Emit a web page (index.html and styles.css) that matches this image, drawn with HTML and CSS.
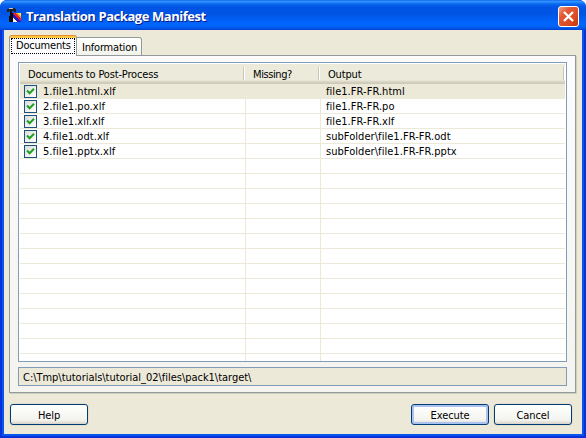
FILE: index.html
```html
<!DOCTYPE html>
<html lang="en">
<head>
<meta charset="utf-8">
<title>Translation Package Manifest</title>
<link rel="stylesheet" href="styles.css">
</head>
<body>
<div class="window">
  <header class="titlebar">
    <svg class="app-icon" width="16" height="16" viewBox="0 0 16 16" shape-rendering="crispEdges">
      <path d="M6 5h9v9H6z" fill="#e81c30"/>
      <path d="M11 5h4v4z" fill="#ffe838"/>
      <path d="M9 5h2l4 4v2z" fill="#ff9020"/>
      <path d="M6 5l9 9h-4L6 9z" fill="#3018b8"/>
      <path d="M6 9l5 5H6z" fill="#fff"/>
      <path d="M4 3h2v2h1v9H3V8h1z" fill="#0c0c0c"/>
      <path d="M1 1h2V0h6v1h1v3H8V3H3v1H1z" fill="#202020"/>
      <path d="M3 0h4v1H3z" fill="#c0c4c8"/>
    </svg>
    <h1 class="title">Translation Package Manifest</h1>
    <button class="close" aria-label="Close"><svg width="19" height="19" viewBox="0 0 19 19"><path d="M5 5l9 9M14 5l-9 9" stroke="#fff" stroke-width="2.3" fill="none"/></svg></button>
  </header>
  <main class="content">
    <nav class="tabs">
      <div class="tab active"><span class="focus"><span class="t-docs">Documents</span></span></div>
      <div class="tab"><span class="t-info">Information</span></div>
    </nav>
    <section class="panel">
      <div class="list">
        <div class="row head"><span><b class="h-docs">Documents to Post-Process</b></span><span><b class="h-miss">Missing?</b></span><span><b class="h-out">Output</b></span></div>
        <div class="rows">
          <div class="row selected"><span><i class="check"><svg width="11" height="11" viewBox="0 0 11 11"><path d="M2 4.5l2.6 2.7L9 2.7" /></svg></i><b>1.file1.html.xlf</b></span><span></span><span><b>file1.FR-FR.html</b></span></div>
          <div class="row"><span><i class="check"><svg width="11" height="11" viewBox="0 0 11 11"><path d="M2 4.5l2.6 2.7L9 2.7" /></svg></i><b>2.file1.po.xlf</b></span><span></span><span><b>file1.FR-FR.po</b></span></div>
          <div class="row"><span><i class="check"><svg width="11" height="11" viewBox="0 0 11 11"><path d="M2 4.5l2.6 2.7L9 2.7" /></svg></i><b>3.file1.xlf.xlf</b></span><span></span><span><b>file1.FR-FR.xlf</b></span></div>
          <div class="row"><span><i class="check"><svg width="11" height="11" viewBox="0 0 11 11"><path d="M2 4.5l2.6 2.7L9 2.7" /></svg></i><b>4.file1.odt.xlf</b></span><span></span><span><b>subFolder\file1.FR-FR.odt</b></span></div>
          <div class="row"><span><i class="check"><svg width="11" height="11" viewBox="0 0 11 11"><path d="M2 4.5l2.6 2.7L9 2.7" /></svg></i><b>5.file1.pptx.xlf</b></span><span></span><span><b>subFolder\file1.FR-FR.pptx</b></span></div>
          <div class="row"><span></span><span></span><span></span></div>
          <div class="row"><span></span><span></span><span></span></div>
          <div class="row"><span></span><span></span><span></span></div>
          <div class="row"><span></span><span></span><span></span></div>
          <div class="row"><span></span><span></span><span></span></div>
          <div class="row"><span></span><span></span><span></span></div>
          <div class="row"><span></span><span></span><span></span></div>
          <div class="row"><span></span><span></span><span></span></div>
          <div class="row"><span></span><span></span><span></span></div>
          <div class="row"><span></span><span></span><span></span></div>
          <div class="row"><span></span><span></span><span></span></div>
          <div class="row"><span></span><span></span><span></span></div>
          <div class="row"><span></span><span></span><span></span></div>
          <div class="row last"><span></span><span></span><span></span></div>
        </div>
      </div>
      <div class="path"><span>C:\Tmp\tutorials\tutorial_02\files\pack1\target\</span></div>
    </section>
    <footer class="actions">
      <button class="btn help">Help</button>
      <button class="btn default">Execute</button>
      <button class="btn">Cancel</button>
    </footer>
  </main>
</div>
</body>
</html>
```
FILE: styles.css
```css
* { box-sizing: border-box; }
body { margin: 0; background: #fff; font: 11px/13px "DejaVu Sans Condensed", "DejaVu Sans", sans-serif; font-stretch: condensed; letter-spacing: -0.2px; color: #000; overflow: hidden; }
b, i { font-weight: normal; font-style: normal; }
.window { width: 586px; height: 438px; border-radius: 7px 7px 0 0; background: #0831d9; overflow: hidden; display: flex; flex-direction: column; }
.titlebar { height: 30px; flex: none; display: flex; align-items: flex-start; padding: 6px 7px 0 6px; background: linear-gradient(#0058e6 0, #3a93ff 1px, #288eff 2px, #0b66ee 4px, #0055e5 7px, #0054e3 14px, #0060f8 20px, #0066ff 25px, #005bea 28px, #003dd0 30px); }
.app-icon { margin-top: 2px; flex: none; }
.title { flex: 1; margin: 2px 0 0 4px; font: bold 13px/17px "Open Sans", "Noto Sans", sans-serif; letter-spacing: -0.44px; color: #fff; text-shadow: 1px 1px #0a1883; white-space: nowrap; }
.close { width: 21px; height: 21px; padding: 0; border: 1px solid #fff; border-radius: 3px; background: linear-gradient(135deg, #f0a088, #e35a37 30%, #dc4a22 70%, #c33308); }
.close svg { display: block; }
.content { flex: 1; display: flex; flex-direction: column; margin: 0 4px 4px; padding: 5px 6px 9px 5px; background: #ece9d8; box-shadow: 0 0 0 2px #0855ee; clip-path: inset(0 -2px -2px -2px); }
.tabs { display: flex; align-items: flex-end; height: 21px; flex: none; position: relative; margin-bottom: -1px; }
.tab { width: 65px; height: 19px; padding: 3px 0 0 5px; border: 1px solid #919b9c; border-left: 0; border-radius: 0 3px 0 0; background: linear-gradient(#fff, #f3f3ec); white-space: nowrap; }
.tab.active { width: 68px; height: 21px; padding: 3px 1px 0; border: 1px solid #919b9c; border-width: 0 1px; border-radius: 3px 3px 0 0; background: linear-gradient(#e68b2c 0 1px, #ffc73c 1px 3px, #fcfcfe 3px); }
.focus { display: block; height: 16px; padding: 0 0 0 4px; border: 1px dotted #000; }
.panel { height: 338px; flex: none; padding: 6px 8px 7px; border: 1px solid #919b9c; background: linear-gradient(#fcfcfe, #f4f3ee); box-shadow: 1px 1px #d0cebf; }
.list { height: 300px; border: 1px solid #7f9db9; background: #fff; padding: 1px; }
.row { display: grid; grid-template-columns: 226px 75px 1fr; height: 15px; border-bottom: 1px solid #ece9d8; white-space: nowrap; letter-spacing: 0.05px; }
.row b { margin-top: 1px; }
.row > span { display: flex; border-right: 1px solid #ece9d8; padding-left: 5px; min-width: 0; }
.row > span:last-child { border-right: 0; }
.row > span:first-child { padding-left: 4px; }
.row.selected, .row.selected > span { background: #ece9d8; }
.row.last { border: 0; height: 7px; }
.row.head { height: 20px; grid-template-columns: 224px 75px 1fr; background: linear-gradient(#ebeadb 16px, #e2decd 17px, #d6d2c2 18px, #cbc7b8 20px); border: 0; padding: 3px 1px 4px 0; letter-spacing: -0.17px; }
.row.head b { margin-top: 0; }
.row.head .h-miss { letter-spacing: -0.4px; }
.row.head > span, .row.head > span:last-child { border-right: 1px solid #c7c5b2; box-shadow: 1px 0 #fff; padding: 1px 0 0 9px; height: 13px; }
.row.head > span:first-child { padding-left: 8px; }
.check { flex: none; width: 13px; height: 13px; margin: 1px 6px 0 0; border: 1px solid #1c5180; background: linear-gradient(135deg, #dcdcd7, #fff); }
.check svg { display: block; }
.check path { fill: none; stroke: #21a121; stroke-width: 2; }
.path { height: 19px; margin-top: 5px; padding: 3px 4px; border: 1px solid #7f9db9; background: #ece9d8; white-space: nowrap; letter-spacing: -0.03px; }
.actions { display: flex; gap: 5px; margin: 11px 4px 0 1px; }
.btn { width: 78px; height: 21px; padding: 1px 0 0; border: 1px solid #003c74; border-radius: 3px; font: inherit; letter-spacing: -0.1px; background: linear-gradient(#fff, #f3f3ee 80%, #d8d2c8); box-shadow: 0 0 0 1px #e3e0d0; }
.help { margin-right: auto; }
.default { box-shadow: inset 0 0 0 2px #a9c2ef; }
```
